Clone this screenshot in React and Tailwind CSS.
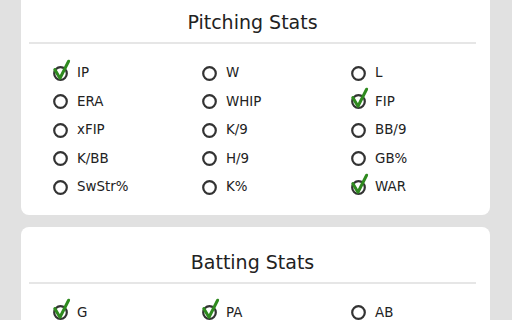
import React, { useState } from 'react';

const pitching = [
    { key: 'IP', on: true }, { key: 'W' }, { key: 'L' },
    { key: 'ERA' }, { key: 'WHIP' }, { key: 'FIP', on: true },
    { key: 'xFIP' }, { key: 'K/9' }, { key: 'BB/9' },
    { key: 'K/BB' }, { key: 'H/9' }, { key: 'GB%' },
    { key: 'SwStr%' }, { key: 'K%' }, { key: 'WAR', on: true },
];

const batting = [
    { key: 'G', on: true }, { key: 'PA', on: true }, { key: 'AB' },
    { key: 'H' }, { key: 'HR', on: true }, { key: 'R' },
    { key: 'RBI' }, { key: 'SB' }, { key: 'AVG', on: true },
];

// --- circle with optional green tick over it ---
const StatToggle = ({ checked }) => (
    <svg width="15" height="15" viewBox="0 0 15 15" overflow="visible" className="shrink-0">
        <circle cx="7.5" cy="7.5" r="6.3" fill="none" stroke="#333" strokeWidth="2.2" />
        {checked && (
            <path
                d="M1.8 3.6 L7 12.2 L15.6 -4.8"
                fill="none"
                stroke="#2f8a1f"
                strokeWidth="3"
                strokeLinecap="round"
                strokeLinejoin="round"
            />
        )}
    </svg>
);

const StatCard = ({ title, items }) => {
    const [selected, setSelected] = useState(() =>
        Object.fromEntries(items.map(i => [i.key, !!i.on]))
    );

    const toggle = (key) => setSelected(s => ({ ...s, [key]: !s[key] }));

    return (
        <div className="bg-white rounded-lg pt-[22px] pb-[13px] pl-2 pr-[14px]">
            <h2 className="text-[19px] leading-[26px] text-center text-[#222]">{title}</h2>
            <div className="mt-[7px] h-[2px] bg-[#e6e6e6]" />
            <div className="grid grid-cols-3 mt-[15px]">
                {items.map(item => (
                    <button
                        key={item.key}
                        onClick={() => toggle(item.key)}
                        className="flex items-center gap-[9px] h-[28.5px] pl-6 text-left text-[13.4px] text-[#222]"
                    >
                        <StatToggle checked={selected[item.key]} />
                        <span>{item.key}</span>
                    </button>
                ))}
            </div>
        </div>
    );
};

export default function App() {
    return (
        <div
            className="min-h-screen bg-[#e1e1e1] pl-[21px] pr-[22px] overflow-hidden"
            style={{ fontFamily: '"DejaVu Sans", Verdana, sans-serif' }}
        >
            <div className="-mt-[13px] flex flex-col gap-3 pb-4">
                <StatCard title="Pitching Stats" items={pitching} />
                <StatCard title="Batting Stats" items={batting} />
            </div>
        </div>
    );
}
